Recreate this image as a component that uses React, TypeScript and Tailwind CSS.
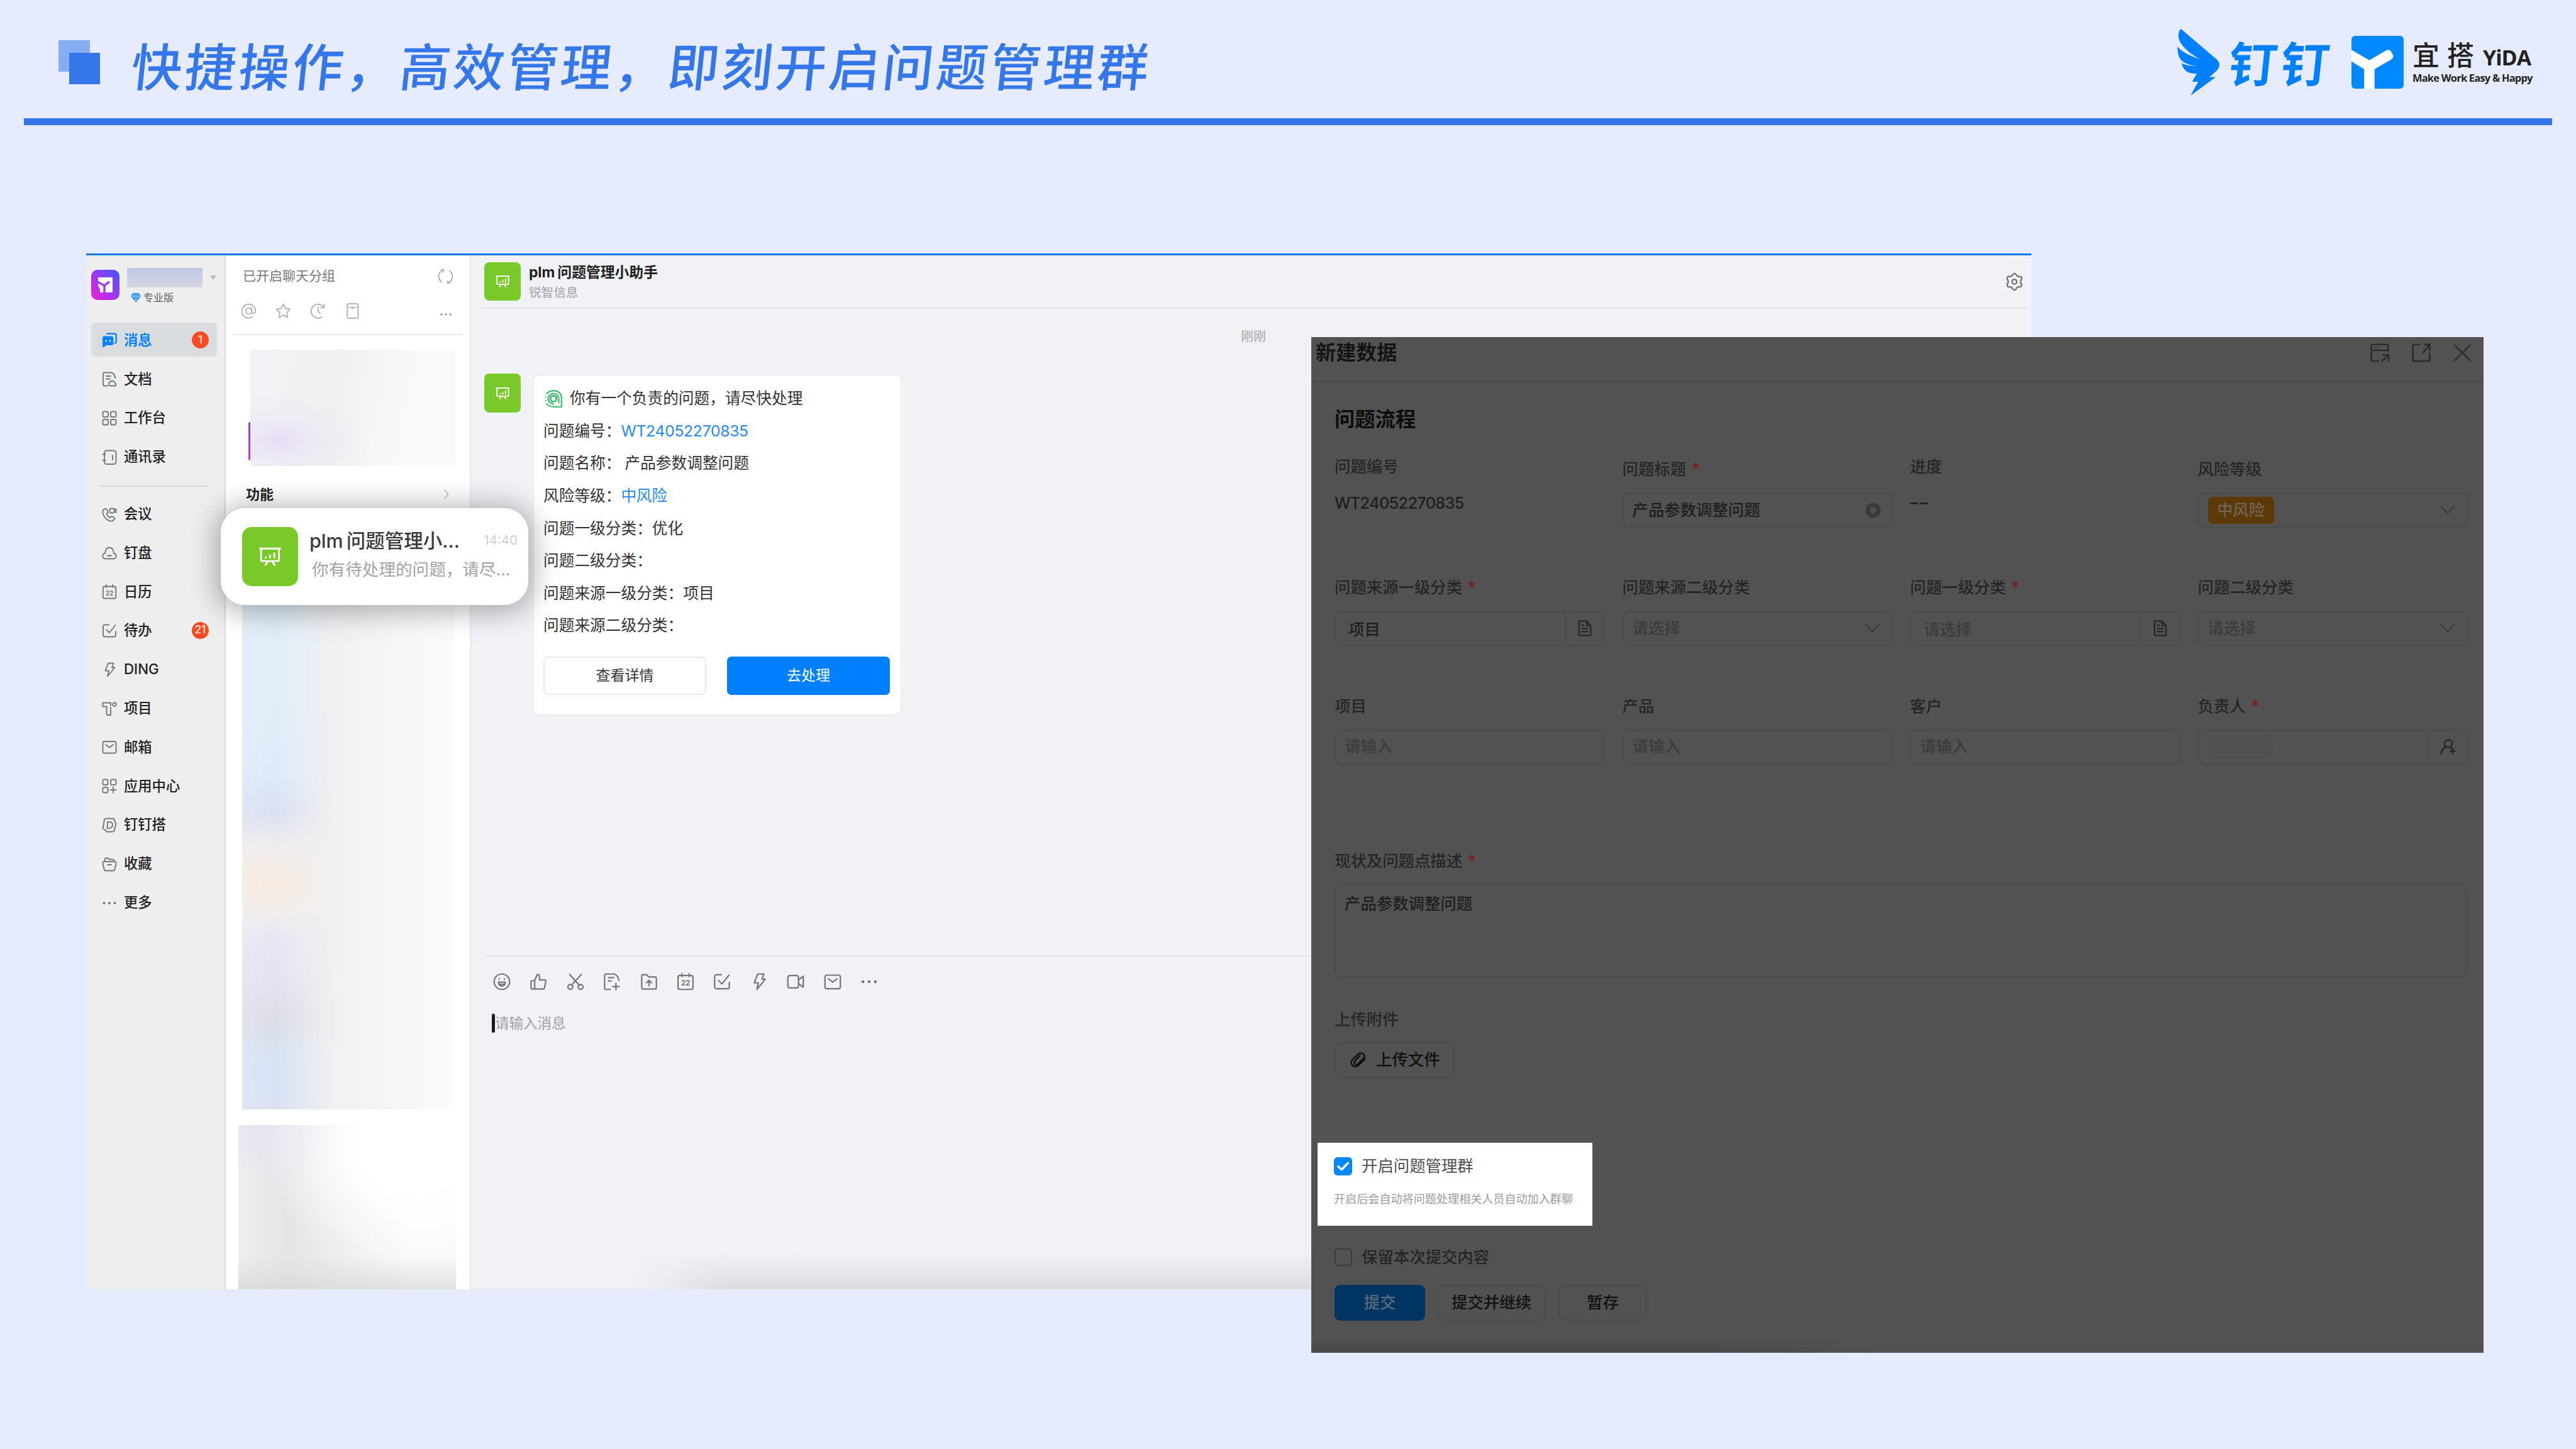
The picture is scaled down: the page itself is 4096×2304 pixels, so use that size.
import type { ReactNode } from "react";

type IconProps = { className?: string; children: ReactNode; width?: number };

function Icon({ className = "", children, width = 1.9 }: IconProps) {
  return (
    <svg
      viewBox="0 0 24 24"
      fill="none"
      stroke="currentColor"
      strokeWidth={width}
      strokeLinecap="round"
      strokeLinejoin="round"
      className={`shrink-0 ${className}`}
      aria-hidden
    >
      {children}
    </svg>
  );
}

const DOTS = (
  <g fill="currentColor" stroke="none">
    <circle cx="3.500" cy="12" r="2" />
    <circle cx="12" cy="12" r="2" />
    <circle cx="20.500" cy="12" r="2" />
  </g>
);

const TODO = (
  <>
    <path d="M11 2.500H4.500a2.500 2.500 0 0 0-2.500 2.500v14a2.500 2.500 0 0 0 2.500 2.500h15a2.500 2.500 0 0 0 2.500-2.500v-6" />
    <path d="M7.500 10.500l4.500 4.500L21.500 3" />
  </>
);

const BOLT = <path d="M10 1.500h8.500L16 8.500h4.500L9 22.500l2-9H5.500z" />;

const MAIL = (
  <>
    <rect x="1.500" y="3" width="21" height="18.500" rx="2.500" />
    <path d="M6 8l6 4.500L18 8" />
  </>
);

const CALENDAR = (
  <>
    <rect x="1.800" y="3.500" width="20.400" height="19" rx="2.500" />
    <path d="M7 1v4M17 1v4" />
    <text
      x="12"
      y="17.500"
      fontSize="10"
      fontWeight="700"
      textAnchor="middle"
      fill="currentColor"
      stroke="none"
      fontFamily="Inter, sans-serif"
    >
      22
    </text>
  </>
);

type NavItem = { label: string; icon: ReactNode; badge?: string; active?: boolean };

const NAV_TOP: NavItem[] = [
  {
    label: "消息",
    badge: "1",
    active: true,
    icon: (
      <>
        <path
          d="M2 9.500q0-2 2-2h11.500q2 0 2 2v8.500q0 2-2 2H7L2 23.500z"
          fill="currentColor"
        />
        <path d="M8.500 2.500H19q4 0 4 4v7q0 3-2 4.500" strokeWidth="2.600" />
        <circle cx="6.800" cy="14" r="1.500" fill="#dadddf" stroke="none" />
        <circle cx="13" cy="14" r="1.500" fill="#dadddf" stroke="none" />
      </>
    ),
  },
  {
    label: "文档",
    icon: (
      <>
        <path d="M9 22.500H4a2 2 0 0 1-2-2V3.500a2 2 0 0 1 2-2h11.500q5 2 5.500 8.500" />
        <path d="M7 7h7M7 11.500h6" />
        <path d="M13 22.500q-3.500-2.500-1-5.500q1-1.500 2.500-1.500q3-2.500 5 1q4 2 2 6z" />
      </>
    ),
  },
  {
    label: "工作台",
    icon: (
      <>
        <rect x="1.500" y="1.500" width="8.500" height="8.500" rx="2.300" />
        <rect x="14" y="1.500" width="8.500" height="8.500" rx="2.300" />
        <rect x="1.500" y="14" width="8.500" height="8.500" rx="2.300" />
        <rect x="14" y="14" width="8.500" height="8.500" rx="2.300" />
      </>
    ),
  },
  {
    label: "通讯录",
    icon: (
      <>
        <rect x="4" y="1.500" width="18.500" height="21.500" rx="3.500" />
        <path d="M17 9v7M1.500 7.500h4M1.500 17h4" />
      </>
    ),
  },
];

const NAV_BOTTOM: NavItem[] = [
  {
    label: "会议",
    icon: (
      <>
        <path d="M5 3q-4 1.500-3.500 6.500T8 20q4 3.500 8.500 2.500l3.500-3q.8-1-.3-2l-3-2.200q-1.200-.6-2 .4l-1.500 1.500Q8.500 14.500 7.500 11l1.600-1.400q1-.9.4-2L7.800 4Q7 2.500 5 3z" />
        <rect x="12.500" y="2.500" width="7" height="7" rx="1.500" />
        <path d="M19.500 5l3-2v6l-3-1.500" />
      </>
    ),
  },
  {
    label: "钉盘",
    icon: (
      <>
        <path d="M6 21.500q-4.500 0-4.800-4.200Q1.500 13.500 5.200 12.500Q5.500 4 12 3.500q6.500.5 6.800 9q3.700 1 4 4.800q-.3 4.200-4.800 4.200z" />
        <path d="M9 16q3 2 6 0" />
      </>
    ),
  },
  { label: "日历", icon: CALENDAR },
  { label: "待办", badge: "21", icon: TODO },
  { label: "DING", icon: BOLT },
  {
    label: "项目",
    icon: (
      <>
        <path d="M1.500 2.500H14v4.500M1.500 2.500V8.500h6v11q0 2.500 2.500 2.500h4V10" />
        <circle cx="20" cy="5" r="2.800" />
      </>
    ),
  },
  { label: "邮箱", icon: MAIL },
  {
    label: "应用中心",
    icon: (
      <>
        <rect x="1.500" y="1.500" width="8" height="8.500" rx="2" />
        <rect x="14" y="1.500" width="8.500" height="8.500" rx="2" />
        <rect x="1.500" y="14" width="8" height="8.500" rx="2" />
        <path d="M18 13.500v9M13.500 18h9" />
      </>
    ),
  },
  {
    label: "钉钉搭",
    icon: (
      <>
        <path d="M7 1.500h10.500q2 0 2 2l3 6.500l-3 11q-.5 1.500-2.500 1.500H8.500q-2 0-2-2l-5-3L4 3.500q.5-2 3-2z" />
        <path d="M9 7h4q4 .5 4 4.500T12.500 17H8.500z" />
      </>
    ),
  },
  {
    label: "收藏",
    icon: (
      <>
        <path d="M4.500 8V4.500q0-2 2-2h3l2 2h6q2 0 2 2V8" />
        <path d="M3 8h18q2 .5 1.500 3l-2 9q-.5 2.500-3 2.500h-11q-2.500 0-3-2.500l-2-9Q1 8.500 3 8z" />
        <path d="M9 13h6" />
      </>
    ),
  },
  { label: "更多", icon: DOTS },
];

const TOOLS: ReactNode[] = [
  <>
    <circle cx="12" cy="12" r="10.500" />
    <path d="M7.500 12.500h9q0 5.500-4.500 5.500t-4.500-5.500zM8.500 15.500h7" />
    <path d="M8.500 8v.5M15.500 8v.5" />
  </>,
  <>
    <path d="M7 10.500L10.500 2q3 0 3 3v4.500h7q2 0 1.700 2L20.500 20q-.4 2-2.400 2H7z" />
    <path d="M7 10.500H4q-2 0-2 2V20q0 2 2 2h3" />
  </>,
  <>
    <circle cx="5" cy="19" r="3.300" />
    <circle cx="19" cy="19" r="3.300" />
    <path d="M4 2l13 14.500M20 2L7 16.500" />
  </>,
  <>
    <path d="M10 22.500H4a2 2 0 0 1-2-2V3.500a2 2 0 0 1 2-2h11.500q5.500 2.500 6 9" />
    <path d="M7 6.500h7.500M7 11h4M17.500 14v9M13 18.500h9" />
  </>,
  <>
    <path d="M2 20V4.500q0-2 2-2h5l2.500 3H20q2 0 2 2V20q0 2-2 2H4q-2 0-2-2z" />
    <path d="M12 17.500V10.500M8.500 13.500L12 10l3.500 3.500" />
  </>,
  CALENDAR,
  TODO,
  BOLT,
  <>
    <path d="M4.500 3.500H13q3 0 3 3v11q0 3-3 3H4.500q-3 0-3-3v-11q0-3 3-3z" />
    <path d="M16 9.500l6.500-5v15l-6.500-5" />
  </>,
  MAIL,
  DOTS,
];

function BoardAvatar({ className }: { className: string }) {
  return (
    <div className={`flex items-center justify-center shrink-0 bg-[#7ac92b] text-white ${className}`}>
      <svg viewBox="0 0 24 22" fill="none" stroke="currentColor" className="w-[39%]" aria-hidden>
        <path d="M0 2.200h24" strokeWidth="2" />
        <path d="M2.200 2v12.500q0 1.500 1.500 1.500h16.600q1.500 0 1.500-1.500V2" strokeWidth="2" />
        <path d="M7.300 13v-2M12 13V9M16.700 13V6.500" strokeWidth="2" />
        <path d="M9.500 16.500l-3 4.500M14.500 16.500l3 4.500" strokeWidth="2" />
      </svg>
    </div>
  );
}

function SlideHeader() {
  return (
    <header className="h-[199px] flex flex-col px-[38px]">
      <div className="h-[188px] flex">
        <svg viewBox="0 0 66 70" className="w-[66px] h-[70px] ml-[55px] mt-[64px]" aria-hidden>
          <rect width="50" height="50" fill="#85adf2" />
          <rect x="17" y="20" width="49" height="50" fill="#3577e9" />
        </svg>
        <h1 className="ml-[50px] mt-[48px] h-[120px] leading-[120px] text-[81px] tracking-[4.350px] font-medium text-[#3577e9] whitespace-nowrap -skew-x-6">
          快捷操作，高效管理，即刻开启问题管理群
        </h1>
        <div className="ml-auto flex">
          <svg
            viewBox="177 180 147 412"
            preserveAspectRatio="none"
            className="w-[67px] h-[106px] mt-[46px] fill-[#0080ff]"
            aria-hidden
          >
            <path d="M190 180L316 370Q324 385 324 402Q324 420 317 434L290 477L311 478L223 592L250 507L229 506L245 456Q214 458 203 432Q193 412 193 392Q212 410 247 410Q207 402 190 372Q177 345 178 290Q200 335 255 366Q213 326 193 277Q181 250 181 222Q182 185 190 180Z" />
          </svg>
          <div className="ml-[15px] mt-[58px] h-[90px] leading-[90px] text-[77px] tracking-[5.700px] font-bold text-[#0080ff] -skew-x-6 whitespace-nowrap">
            钉钉
          </div>
          <svg
            viewBox="785 222 181 330"
            preserveAspectRatio="none"
            className="w-[83px] h-[84px] ml-[30px] mt-[57px] rounded-[6px]"
            aria-hidden
          >
            <rect x="785" y="222" width="181" height="330" fill="#0088ff" />
            <path
              d="M785 309L847 374L903 315Q913 304 920 314Q932 345 930 355Q929 362 923 369L865 430V552H829V430L785 382Z"
              fill="#fff"
            />
          </svg>
          <div className="ml-[14px] mt-[60px] w-[222px] text-[#222]">
            <div className="flex items-baseline h-[57px] leading-[57px]">
              <span className="text-[43px] tracking-[12px] font-medium">宜搭</span>
              <span className="ml-[2px] text-[34px] font-['Open_Sans'] font-bold tracking-[-1px]">YiDA</span>
            </div>
            <div className="text-[16.400px] leading-[20px] h-[20px] -mt-[3px] font-['Open_Sans'] font-bold tracking-[-0.750px] whitespace-nowrap">
              Make Work Easy &amp; Happy
            </div>
          </div>
        </div>
      </div>
      <div className="h-[11px] bg-[#3577e9]" />
    </header>
  );
}

function NavRow({ item }: { item: NavItem }) {
  return (
    <li className="h-[61.800px] flex items-center">
      <div
        className={`w-[200px] h-[54px] ml-[8px] pl-[17px] pr-[13px] flex items-center rounded-[6px] ${
          item.active ? "bg-[#dadddf] text-[#0a84f5]" : "text-[#222]"
        }`}
      >
        <Icon className={`w-[24px] h-[24px] ${item.active ? "" : "text-[#777] mt-[2px]"}`}>{item.icon}</Icon>
        <span
          className={`ml-[11px] text-[22.300px] whitespace-nowrap ${
            item.active ? "font-bold" : "font-medium"
          }`}
        >
          {item.label}
        </span>
        {item.badge ? (
          <span className="ml-auto w-[27px] h-[27px] rounded-full bg-[#fb4b25] text-white text-[17px] flex items-center justify-center">
            {item.badge}
          </span>
        ) : null}
      </div>
    </li>
  );
}

function Sidebar() {
  return (
    <aside className="w-[222px] shrink-0 bg-[#eeeeee] border-r-2 border-[#dcdcdc]">
      <div className="h-[103.600px] flex pt-[20px] pl-[8px]">
        <svg viewBox="0 0 45 48" className="w-[45px] h-[48px] mt-[3px]" aria-hidden>
          <defs>
            <linearGradient id="org" x1="0" y1="1" x2="1" y2="0">
              <stop offset="0" stopColor="#f01fd0" />
              <stop offset="0.450" stopColor="#a535f0" />
              <stop offset="1" stopColor="#3d5cf5" />
            </linearGradient>
          </defs>
          <rect width="45" height="48" rx="10" fill="url(#org)" />
          <path d="M11 12h23v24H11z" fill="#fff" />
          <path d="M8 18l13 7l8-6M21 25v13" stroke="#9a3cf0" strokeWidth="3.500" fill="none" />
          <path d="M10 24v14h9z" fill="#d12be0" />
          <path d="M14 30l4-2v8h-4z" fill="#fff" />
        </svg>
        <div className="ml-[12px]">
          <div className="w-[120px] h-[31px] bg-linear-to-b from-[#c0c5e6] to-[#d5d6e2]" />
          <div className="flex items-center h-[32px] ml-[6px] text-[16px] text-[#5c5c5c]">
            <svg viewBox="0 0 16 15" className="w-[16px] h-[15px] mr-[4px]" aria-hidden>
              <path d="M3.500 0h9L16 5L8 15L0 5z" fill="#2b8df0" />
              <path d="M1 5h14M5 5l3 8l3-8M6 1L5 5M10 1l1 4" stroke="#bfe0ff" fill="none" />
            </svg>
            专业版
          </div>
        </div>
        <div className="ml-[12px] mt-[12px] w-0 h-0 border-x-[5px] border-x-transparent border-t-[7px] border-t-[#bbb]" />
      </div>
      <ul>
        {NAV_TOP.map((item) => (
          <NavRow key={item.label} item={item} />
        ))}
      </ul>
      <div className="mt-[15px] mb-[12px] ml-[22px] w-[172px] h-[2px] bg-[#d6d6d6]" />
      <ul>
        {NAV_BOTTOM.map((item) => (
          <NavRow key={item.label} item={item} />
        ))}
      </ul>
    </aside>
  );
}

function ChatList() {
  return (
    <section className="w-[390px] shrink-0 bg-white border-r-2 border-[#e9e9eb] flex flex-col">
      <div className="h-[66px] pl-[27px] pr-[26px] flex items-center justify-between text-[#777] text-[21px]">
        已开启聊天分组
        <Icon className="w-[25px] h-[25px] text-[#aaa]" width={1.700}>
          <path d="M9 2A10.500 10.500 0 0 0 6 20.500M15 22A10.500 10.500 0 0 0 18 3.500" />
          <path d="M9 2l-3.500 0M15 22l3.500 0M9 2v3M15 22v-3" />
        </Icon>
      </div>
      <div className="h-[59px] pl-[24px] pr-[28px] flex items-start pt-[10px] text-[#b5b5b5]">
        <Icon className="w-[25px] h-[25px] mr-[30px]">
          <circle cx="12" cy="12" r="4.500" />
          <path d="M16.500 7.500v6q1 3 4 2Q22.500 13 22.500 11.500A10.500 10.500 0 1 0 17 21.500" />
        </Icon>
        <Icon className="w-[25px] h-[25px] mr-[30px]">
          <path d="M12 1.500l3.300 6.700l7.200 1l-5.200 5.200l1.200 7.300L12 18.300l-6.500 3.400l1.200-7.300L1.500 9.200l7.200-1z" />
        </Icon>
        <Icon className="w-[25px] h-[25px] mr-[30px]">
          <path d="M18 21A10.500 10.500 0 1 1 21 6.500M21.500 2v5h-5M12.500 6.500v6.500l3 2.500" />
        </Icon>
        <Icon className="w-[25px] h-[25px]">
          <rect x="4" y="1" width="16.500" height="22" rx="2" />
          <path d="M4 6h16.500" strokeWidth="1.200" />
          <path d="M9 6.500h6l-3 3z" fill="currentColor" stroke="none" />
        </Icon>
        <Icon className="w-[20px] h-[20px] ml-auto mt-[8px] text-[#999]">{DOTS}</Icon>
      </div>
      <div className="mx-[12px] h-[2px] bg-[#e8e8e8]" />
      <div className="mt-[23px] ml-[36px] h-[185px] flex items-start">
        <div className="mt-[115px] w-[3px] h-[61px] rounded-l-[3px] bg-linear-to-b from-[#7a45c0] to-[#cc33cc]" />
        <div className="w-[326px] h-[185px] bg-[radial-gradient(ellipse_at_14%_78%,#e8def6_0%,#ebe7f4aa_16%,transparent_36%),linear-gradient(100deg,#f1f3f6_0%,#f0f0f0_40%,#fafafa_80%,#fafafa_100%)]" />
      </div>
      <div className="mt-[28px] h-[34px] pl-[32px] pr-[29px] flex items-center justify-between text-[22px] font-bold text-[#222]">
        功能
        <Icon className="w-[18px] h-[18px] text-[#bbb]">
          <path d="M9 3l8 9l-8 9" />
        </Icon>
      </div>
      <div className="mt-[140px] ml-[26px] w-[337px] h-[821px] shrink-0 bg-linear-to-r from-[#f1f2f2] via-[#f1f1f1] via-45% to-[#fbfbfb]">
        <div className="w-[150px] h-full [mask-image:linear-gradient(to_right,#000b,black_35%,transparent)] bg-[linear-gradient(to_bottom,#dfeefa_0px,#dfedf9_180px,#dce9f8_290px,#d9dff0_348px,#ebebee_395px,#f3ebe6_430px,#f6eae0_465px,#f2edea_505px,#e6e6f3_550px,#e2e3f0_610px,#dadce6_680px,#d5e2f4_745px,#d5e2f4_775px,#dae0f2_821px)]" />
      </div>
      <div className="mt-[25px] ml-[20px] w-[346px] grow bg-[linear-gradient(to_bottom,transparent_80%,#d4d4d4aa_100%),radial-gradient(ellipse_at_78%_15%,white_20%,transparent_60%),radial-gradient(ellipse_at_16%_0%,#e3e5f2_0%,transparent_25%),linear-gradient(to_right,#eeeeee_0%,#e4e5e7_22%,#ebebeb_40%,#f8faf9_80%)]" />
    </section>
  );
}

const MESSAGE_ROWS = [
  { label: "问题编号：", value: "WT24052270835", link: true },
  { label: "问题名称：", value: "产品参数调整问题", indent: true },
  { label: "风险等级：", value: "中风险", link: true },
  { label: "问题一级分类：", value: "优化" },
  { label: "问题二级分类：", value: "" },
  { label: "问题来源一级分类：", value: "项目" },
  { label: "问题来源二级分类：", value: "" },
];

function MessageCard() {
  return (
    <div className="w-[585px] h-[541px] rounded-[10px] bg-white border border-[#e8e9eb] pt-[11px] pl-[15px] text-[24.700px] text-[#333]">
      <div className="h-[51.600px] flex items-center">
        <Icon className="w-[28px] h-[28px] mr-[12px] ml-[2px] text-[#45bf78]" width={2}>
          <circle cx="12" cy="12" r="4" strokeWidth="2.600" />
          <path d="M12 4.800a7.200 7.200 0 1 0 0 14.400M12 4.800a7.200 7.200 0 0 1 7.200 7.200V17" />
          <path d="M3 5Q7 1 12 1q11 .5 11 11v11H12Q6 23 3 19" />
          <path d="M1.500 9.500v.1M1.500 14.500v.1" />
        </Icon>
        你有一个负责的问题，请尽快处理
      </div>
      {MESSAGE_ROWS.map((row) => (
        <div key={row.label} className="h-[51.600px] flex items-center whitespace-nowrap">
          <span>{row.label}</span>
          <span
            className={`${row.link ? "text-[#2488f7] tracking-[-0.300px]" : ""} ${row.indent ? "ml-[6px]" : ""}`}
          >
            {row.value}
          </span>
        </div>
      ))}
      <div className="mt-[23px] flex gap-[33px] text-[23px]">
        <button
          type="button"
          className="w-[259px] h-[61px] rounded-[7px] border-2 border-[#e8e8e8] bg-white text-[#333]"
        >
          查看详情
        </button>
        <button type="button" className="w-[259px] h-[61px] rounded-[7px] bg-[#007ffe] text-white">
          去处理
        </button>
      </div>
    </div>
  );
}

function Conversation() {
  return (
    <section className="grow bg-[#f0f2f5] flex flex-col">
      <div className="h-[85px] mr-[4px] ml-[18px] pl-[3px] pr-[8px] flex items-center border-b-2 border-[#e3e4e6]">
        <BoardAvatar className="w-[58px] h-[61px] rounded-[8px]" />
        <div className="ml-[13px]">
          <div className="text-[22.800px] leading-[34px] font-bold text-[#1d1f22]">
            plm<span className="ml-[4px]">问题管理小助手</span>
          </div>
          <div className="text-[19.600px] leading-[30px] text-[#a0a0a2]">锐智信息</div>
        </div>
        <Icon className="w-[30px] h-[30px] ml-auto text-[#777]">
          <path d="M12 1.500q2 0 2.600 2.500l2.400 1.500q3-.8 4 1t-1 4v3q2 2 1 3.800t-4 1L14.600 20q-.6 2.500-2.600 2.500T9.400 20L7 18.500q-3 .6-4-1.200t1-3.800v-3q-2-2-1-4t4-1L9.400 4Q10 1.500 12 1.500z" />
          <circle cx="12" cy="12" r="3" />
        </Icon>
      </div>
      <div className="h-[1028px] flex flex-col">
        <div className="mt-[28px] pl-[7px] h-[32px] text-center text-[20px] leading-[32px] text-[#a2a2a4]">
          刚刚
        </div>
        <div className="mt-[43px] ml-[21px] flex items-start">
          <BoardAvatar className="w-[58px] h-[62px] rounded-[8px]" />
          <div className="ml-[20px] mt-[2px]">
            <MessageCard />
          </div>
        </div>
      </div>
      <div className="ml-[22px] mr-[4px] h-[2px] bg-[#e3e4e6]" />
      <div className="ml-[35px] mt-[26px] flex gap-[30.400px] text-[#757678]">
        {TOOLS.map((tool, i) => (
          <Icon key={i} className="w-[28px] h-[28px]">
            {tool}
          </Icon>
        ))}
      </div>
      <div className="ml-[33px] mt-[36px] h-[32px] flex items-center text-[22.500px] text-[#a0a1a3]">
        <span className="w-[5px] h-[30px] rounded-[2px] bg-[#1a1a1a]" />
        请输入消息
      </div>
      <div className="mt-auto ml-[260px] h-[58px] bg-[linear-gradient(to_bottom,transparent,#dadbdd)] [mask-image:linear-gradient(to_right,transparent,black_150px)]" />
    </section>
  );
}

function ChatWindow() {
  return (
    <div className="absolute left-[137px] top-[403px] w-[3093px] h-[1647px] flex flex-col">
      <div className="h-[3px] shrink-0 bg-[#1277e6]" />
      <div className="grow flex">
        <Sidebar />
        <ChatList />
        <Conversation />
      </div>
    </div>
  );
}

function FloatingChat() {
  return (
    <div className="absolute left-[351px] top-[808px] w-[489px] h-[154px] rounded-[38px] bg-white shadow-[0_4px_44px_8px_rgba(0,0,0,0.3)] flex items-center pl-[34px] pr-[17px]">
      <BoardAvatar className="w-[89px] h-[94px] rounded-[15px]" />
      <div className="ml-[18px] -mt-[7px] grow">
        <div className="h-[46px] flex items-center justify-between">
          <span className="text-[30.500px] font-medium text-[#3a3a3a] whitespace-nowrap">
            plm<span className="ml-[5px]">问题管理小...</span>
          </span>
          <span className="text-[20.500px] text-[#cfcfcf]">14:40</span>
        </div>
        <div className="ml-[4px] h-[44px] leading-[44px] text-[26.600px] text-[#a3a3a3] whitespace-nowrap">
          你有待处理的问题，请尽...
        </div>
      </div>
    </div>
  );
}

type FieldProps = {
  label: string;
  required?: boolean;
  lower?: boolean;
  children: ReactNode;
};

function Field({ label, required, lower, children }: FieldProps) {
  return (
    <div className={`w-[429px] shrink-0 ${lower ? "pt-[4px]" : ""}`}>
      <div className="h-[34px] leading-[34px] text-[#252525] whitespace-nowrap">
        {label}
        {required ? <span className="ml-[8px] font-bold text-[#74231c]">*</span> : null}
      </div>
      {children}
    </div>
  );
}

const BOX = "mt-[20px] h-[56px] rounded-[9px] border-2 border-[#4b4b4c] flex items-center";

function Chevron() {
  return (
    <Icon className="w-[26px] h-[26px] ml-auto mr-[17px] text-[#393939]" width={1.700}>
      <path d="M2.500 6.500L12 17l9.500-10.500" />
    </Icon>
  );
}

function DocAddon() {
  return (
    <span className="ml-auto w-[61px] h-full border-l-2 border-[#4b4b4c] flex items-center justify-center text-[#252525]">
      <Icon className="w-[26px] h-[26px]" width={2}>
        <path d="M3.500 1.500h11l6 6.500v14.500h-17zM14.500 1.500V8h6M8 12.500h8M8 17h8M8 7.500h2" />
      </Icon>
    </span>
  );
}

function DataForm() {
  return (
    <div className="absolute left-[2085px] top-[536px] w-[1864px] h-[1615px] bg-[#525252] text-[25.400px] font-medium text-[#1e1e1e] flex flex-col">
      <div className="h-[72px] shrink-0 border-b-2 border-[#494949] pl-[7px] pr-[17px] flex items-start">
        <h2 className="text-[32.300px] leading-[49px] font-bold text-[#141414]">新建数据</h2>
        <div className="ml-auto mt-[9px] flex gap-[34px] text-[#292929]">
          <Icon className="w-[32px] h-[32px]" width={1.800}>
            <path d="M10 22H4q-2 0-2-2V4q0-2 2-2h16q2 0 2 2v6M2 9h20M6 5.500h.1M9.500 5.500h.1M15 14.500h7.500v7.500M22.500 14.500l-8 7.500" />
          </Icon>
          <Icon className="w-[32px] h-[32px]" width={1.800}>
            <path d="M10 2H4q-2 0-2 2v16q0 2 2 2h16q2 0 2-2v-7M16 2h6v7M22 2l-8 10" />
          </Icon>
          <Icon className="w-[32px] h-[32px]" width={1.700}>
            <path d="M2.500 3l18 18M20.500 3L2.500 21" />
          </Icon>
        </div>
      </div>
      <div className="pl-[37px] pt-[42px]">
        <h3 className="text-[32.300px] leading-[34px] font-bold text-[#0c0c0c]">问题流程</h3>

        <div className="mt-[41px] h-[192px] flex gap-[28.500px]">
          <Field label="问题编号">
            <div className="mt-[24px] leading-[34px] tracking-[-0.750px]">WT24052270835</div>
          </Field>
          <Field label="问题标题" required lower>
            <div className={`${BOX} pl-[14px]`}>
              产品参数调整问题
              <svg viewBox="0 0 24 24" className="w-[25px] h-[25px] ml-auto mr-[16px]" aria-hidden>
                <circle cx="12" cy="12" r="8" fill="none" stroke="#3a3a3a" strokeWidth="7" />
              </svg>
            </div>
          </Field>
          <Field label="进度">
            <div className="mt-[24px] h-[34px] flex items-center gap-[3px]">
              <span className="w-[13px] h-[3px] bg-[#252525]" />
              <span className="w-[13px] h-[3px] bg-[#252525]" />
            </div>
          </Field>
          <Field label="风险等级" lower>
            <div className={`${BOX} pl-[14px]`}>
              <span className="w-[105px] h-[43px] rounded-[7px] bg-[#5c3a08] text-[#716355] flex items-center justify-center">
                中风险
              </span>
              <Chevron />
            </div>
          </Field>
        </div>

        <div className="h-[188.500px] flex gap-[28.500px]">
          <Field label="问题来源一级分类" required>
            <div className={`${BOX} pl-[20px]`}>
              <span className="mt-[4px]">项目</span>
              <DocAddon />
            </div>
          </Field>
          <Field label="问题来源二级分类">
            <div className={`${BOX} pl-[14px] text-[#3b3b3b]`}>
              请选择
              <Chevron />
            </div>
          </Field>
          <Field label="问题一级分类" required>
            <div className={`${BOX} pl-[20px] text-[#3b3b3b]`}>
              <span className="mt-[4px]">请选择</span>
              <DocAddon />
            </div>
          </Field>
          <Field label="问题二级分类">
            <div className={`${BOX} pl-[14px] text-[#3b3b3b]`}>
              请选择
              <Chevron />
            </div>
          </Field>
        </div>

        <div className="h-[246.500px] flex gap-[28.500px]">
          <Field label="项目">
            <div className={`${BOX} pl-[14px] text-[#3b3b3b]`}>请输入</div>
          </Field>
          <Field label="产品">
            <div className={`${BOX} pl-[14px] text-[#3b3b3b]`}>请输入</div>
          </Field>
          <Field label="客户">
            <div className={`${BOX} pl-[14px] text-[#3b3b3b]`}>请输入</div>
          </Field>
          <Field label="负责人" required>
            <div className={`${BOX} pl-[18px]`}>
              <span className="w-[100px] h-[38px] bg-[#505051]" />
              <span className="ml-auto w-[61px] h-full border-l-2 border-[#4b4b4c] flex items-center justify-center text-[#252525]">
                <Icon className="w-[27px] h-[27px]" width={2}>
                  <circle cx="12.500" cy="7.500" r="5.500" />
                  <path d="M9 12q-6 3-7 10M15 12.500l2 1.500M18.500 14.500v7M15 18h7" />
                </Icon>
              </span>
            </div>
          </Field>
        </div>

        <div className="h-[34px] leading-[34px] text-[#252525]">
          现状及问题点描述<span className="ml-[8px] font-bold text-[#74231c]">*</span>
        </div>
        <div className="mt-[20px] w-[1801px] h-[148px] rounded-[9px] border-2 border-[#4b4b4c] pl-[14px] pt-[11px] leading-[36px]">
          产品参数调整问题
        </div>

        <div className="mt-[50px] h-[34px] leading-[34px] text-[#252525]">上传附件</div>
        <button
          type="button"
          className="mt-[19px] w-[191px] h-[57px] rounded-[9px] border-2 border-[#4b4b4c] flex items-center pl-[22px] text-[#101010]"
        >
          <Icon className="w-[27px] h-[27px] mr-[15px]" width={2.200}>
            <path d="M21.500 10.500l-9 9q-4 3.500-8 .5t-1-8L12 4q3-3 6.500-1t2 5.500l-8.500 9q-2.500 2-4.500 0t0-4.500l7-7" />
          </Icon>
          上传文件
        </button>

        <div className="-ml-[27px] mt-[103px] w-[437px] h-[132px] bg-white pl-[26px] pt-[20px] font-normal">
          <div className="h-[34px] flex items-center text-[#505050]">
            <span className="w-[29px] h-[29px] rounded-[6px] bg-[#0087fa] text-white flex items-center justify-center mr-[15px]">
              <Icon className="w-[21px] h-[21px]" width={4}>
                <path d="M3 12l6.500 6L21 6" />
              </Icon>
            </span>
            开启问题管理群
          </div>
          <div className="mt-[19px] leading-[32px] text-[18.100px] text-[#999] whitespace-nowrap">
            开启后会自动将问题处理相关人员自动加入群聊
          </div>
        </div>

        <div className="mt-[33px] h-[34px] flex items-center text-[#252525]">
          <span className="w-[28px] h-[28px] rounded-[5px] border-2 border-[#3c3c3c] mr-[15px]" />
          保留本次提交内容
        </div>

        <div className="mt-[27px] h-[57px] flex">
          <button type="button" className="w-[144px] h-[57px] rounded-[9px] bg-[#003563] text-[#5d6d7c]">
            提交
          </button>
          <button
            type="button"
            className="ml-[19px] w-[173px] h-[57px] rounded-[9px] border-2 border-[#4b4b4c] text-[#101010]"
          >
            提交并继续
          </button>
          <button
            type="button"
            className="ml-[20px] w-[141px] h-[57px] rounded-[9px] border-2 border-[#4b4b4c] text-[#101010]"
          >
            暂存
          </button>
        </div>
      </div>
      <div className="mt-auto h-[24px] w-[900px] bg-linear-to-b from-transparent to-[#494949] [mask-image:linear-gradient(to_right,black_70%,transparent)]" />
    </div>
  );
}

export default function App() {
  return (
    <main className="relative w-[4096px] h-[2304px] overflow-hidden bg-[#e6ecfd] font-['Inter','Noto_Sans_CJK_SC',sans-serif]">
      <SlideHeader />
      <ChatWindow />
      <FloatingChat />
      <DataForm />
    </main>
  );
}
